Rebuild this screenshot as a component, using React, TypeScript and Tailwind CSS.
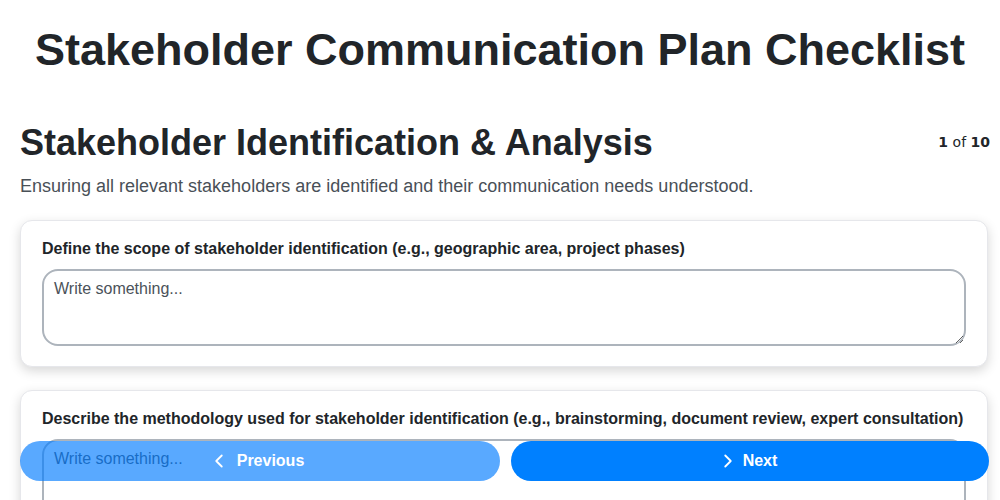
import { ChevronLeft, ChevronRight } from "lucide-react";

const questions = [
  "Define the scope of stakeholder identification (e.g., geographic area, project phases)",
  "Describe the methodology used for stakeholder identification (e.g., brainstorming, document review, expert consultation)",
  "List all identified stakeholders and their roles in the project",
];

function QuestionCard({ label }: { label: string }) {
  return (
    <div className="bg-white border border-[#e6e7eb] rounded-xl shadow-[0_4px_12px_rgba(0,0,0,0.16)] px-[21px] pt-[18px] pb-[20px]">
      <label className="block text-base font-bold text-[#212529] leading-5 mb-[10px]">{label}</label>
      <textarea
        placeholder="Write something..."
        className="block w-full h-[77px] border-2 border-[#adb4bc] rounded-2xl px-[10px] py-[6px] text-base leading-6 text-[#212529] placeholder:text-[#4b5259] outline-none"
      />
    </div>
  );
}

export default function App() {
  return (
    <div className="min-h-screen bg-white font-['Liberation_Sans',Arial,sans-serif] text-[#212529]">
      <h1 className="text-center text-[45px] font-bold leading-[54px] pt-[23px]">
        Stakeholder Communication Plan Checklist
      </h1>

      <div className="pl-5 pr-3 pt-[44px]">
        <div className="flex items-center justify-between">
          <h2 className="text-[36px] font-bold leading-[43px]">Stakeholder Identification &amp; Analysis</h2>
          <div className="text-[14px] font-['DejaVu_Sans',sans-serif] -mr-[2px]">
            <span className="font-bold">1</span> of <span className="font-bold">10</span>
          </div>
        </div>
        <p className="mt-[10px] text-[18px] leading-6 text-[#495057]">
          Ensuring all relevant stakeholders are identified and their communication needs understood.
        </p>

        <div className="mt-[22px] flex flex-col gap-[23px] pb-24">
          {questions.map((q) => (
            <QuestionCard key={q} label={q} />
          ))}
        </div>
      </div>

      <div className="fixed left-5 right-[11px] bottom-[19px] flex gap-[11px]">
        <button className="flex-1 h-10 rounded-full bg-[#007bff] opacity-65 text-white font-bold text-base flex items-center justify-center gap-[7px] pr-[8px]">
          <ChevronLeft size={22} strokeWidth={2} />
          Previous
        </button>
        <button className="flex-1 h-10 rounded-full bg-[#0080ff] text-white font-bold text-base flex items-center justify-center gap-[4px] pr-[6px]">
          <ChevronRight size={22} strokeWidth={2} />
          Next
        </button>
      </div>
    </div>
  );
}
